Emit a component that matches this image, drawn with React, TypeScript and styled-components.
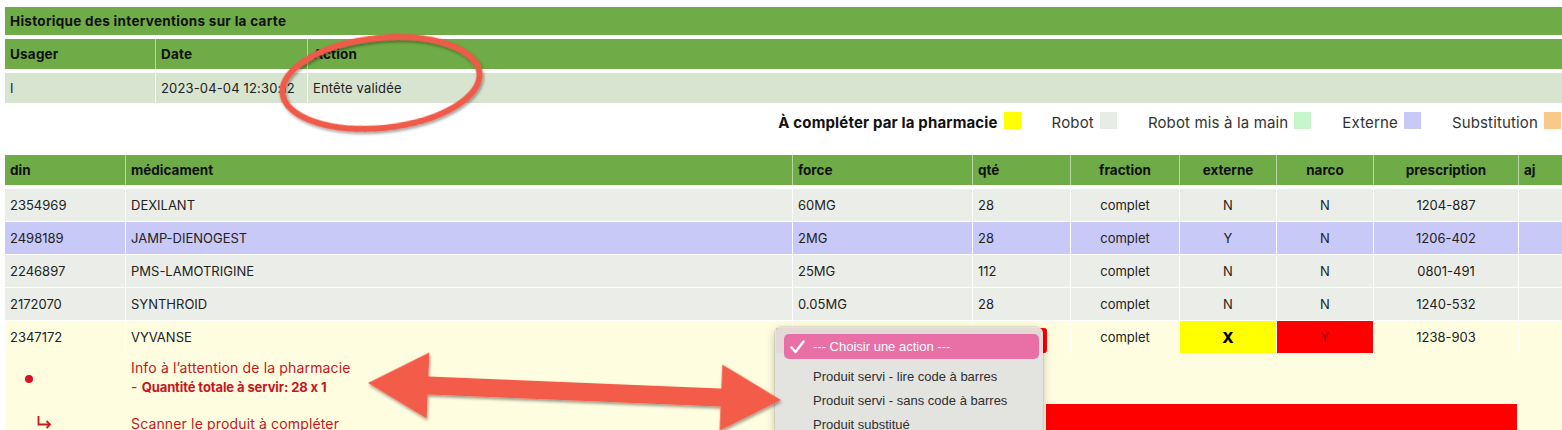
import React from 'react';
import styled, { createGlobalStyle } from 'styled-components';

const GREEN = '#6fab46';
const COLS = '120px 666px 179px 97px 108px 96px 96px 144px 1fr';

const GlobalStyle = createGlobalStyle`
  html, body { margin: 0; padding: 0; background: #fff; overflow: hidden; }
  * { box-sizing: border-box; }
`;

const Root = styled.div`
  position: relative;
  width: 1562px;
  height: 430px;
  overflow: hidden;
  padding: 7px 0 0 5px;
  font-family: Inter, "Open Sans", sans-serif;
  font-feature-settings: "calt" 0;
  color: #222;
  background: #fff;
`;

/* ---------- history table ---------- */
const TitleBar = styled.div`
  height: 28px;
  background: ${GREEN};
  display: flex;
  align-items: center;
  padding-left: 5px;
  font-weight: 700;
  font-size: 13.5px;
  letter-spacing: 0.3px;
  color: #111;
`;

const HistRow = styled.div<{ $head?: boolean }>`
  margin-top: 4px;
  height: 30px;
  display: grid;
  grid-template-columns: 150px 151px 1fr;
  column-gap: 1px;
  background: ${(p) => (p.$head ? '#b9d7a6' : '#fff')};
`;

const HistCell = styled.div<{ $head?: boolean }>`
  display: flex;
  align-items: center;
  padding-left: 5px;
  background: ${(p) => (p.$head ? GREEN : '#d6e4d0')};
  font-size: ${(p) => (p.$head ? '13.5px' : '13px')};
  font-weight: ${(p) => (p.$head ? 700 : 400)};
  letter-spacing: ${(p) => (p.$head ? '0.2px' : '0.15px')};
  color: ${(p) => (p.$head ? '#111' : '#222')};
`;

/* ---------- legend ---------- */
const Legend = styled.div`
  margin-top: 8px;
  height: 22px;
  width: 1556px;
  display: flex;
  justify-content: flex-end;
  align-items: center;
  gap: 31px;
`;

const LegendItem = styled.div<{ $bold?: boolean }>`
  display: flex;
  align-items: center;
  gap: 6px;
  font-size: 15px;
  letter-spacing: 0.15px;
  font-weight: ${(p) => (p.$bold ? 700 : 400)};
  color: ${(p) => (p.$bold ? '#111' : '#333')};
`;

const Swatch = styled.span<{ $color: string }>`
  display: block;
  width: 17px;
  height: 17px;
  background: ${(p) => p.$color};
  margin-bottom: 3px;
`;

/* ---------- main table ---------- */
const Table = styled.div`
  margin-top: 22px;
`;

const HeadRow = styled.div`
  display: grid;
  grid-template-columns: ${COLS};
  column-gap: 1px;
  height: 30px;
  background: #b9d7a6;
  margin-bottom: 4px;
`;

const HeadCell = styled.div<{ $center?: boolean }>`
  background: ${GREEN};
  display: flex;
  align-items: center;
  justify-content: ${(p) => (p.$center ? 'center' : 'flex-start')};
  padding-left: ${(p) => (p.$center ? '0' : '5px')};
  font-size: 13.5px;
  font-weight: 700;
  color: #111;
  overflow: hidden;
  white-space: nowrap;
`;

const Body = styled.div`
  display: flex;
  flex-direction: column;
  gap: 1px;
`;

const Row = styled.div`
  display: grid;
  grid-template-columns: ${COLS};
  column-gap: 1px;
  height: 32px;
  background: #fff;
`;

const Cell = styled.div<{ $bg: string; $center?: boolean; $bold?: boolean; $color?: string }>`
  background: ${(p) => p.$bg};
  display: flex;
  align-items: center;
  justify-content: ${(p) => (p.$center ? 'center' : 'flex-start')};
  padding-left: ${(p) => (p.$center ? '0' : '5px')};
  font-size: ${(p) => (p.$bold ? '15px' : '13px')};
  font-weight: ${(p) => (p.$bold ? 800 : 400)};
  color: ${(p) => p.$color || '#222'};
  white-space: nowrap;
`;

const ExpandGroup = styled.div`
  background: #fefde0;
`;

const Expansion = styled.div`
  display: grid;
  grid-template-columns: 120px 921px 471px 1fr;
  grid-template-rows: 51px 40px;
  background: #fefde0;
`;

const Dot = styled.span`
  display: block;
  width: 8px;
  height: 8px;
  border-radius: 50%;
  background: #d4141e;
  margin: 22px 0 0 20px;
`;

const InfoText = styled.div`
  padding: 5px 0 0 6px;
  font-size: 14px;
  line-height: 19px;
  letter-spacing: 0.15px;
  color: #c5161d;
`;

const Strong = styled.span`
  font-weight: 700;
  font-size: 13px;
  letter-spacing: -0.1px;
`;

const TurnIcon = styled.svg`
  margin: 12px 0 0 32px;
  display: block;
`;

const ScanText = styled.div`
  padding: 10px 0 0 6px;
  font-size: 14px;
  line-height: 19px;
  letter-spacing: 0.15px;
  color: #c5161d;
  white-space: nowrap;
`;

const RedBlock = styled.div`
  background: #ff0000;
  height: 40px;
`;

/* ---------- open select menu (overlay) ---------- */
const SelectBox = styled.div`
  position: absolute;
  left: 776px;
  top: 328px;
  width: 271px;
  height: 25px;
  background: #ff0000;
  border-radius: 3px;
`;

const Menu = styled.div`
  position: absolute;
  left: 775px;
  top: 327px;
  width: 268px;
  height: 120px;
  padding: 7px 4px 0 9px;
  background: rgba(226, 226, 224, 0.96);
  border-radius: 6px;
  box-shadow: 0 3px 10px rgba(0, 0, 0, 0.25), 0 0 0 0.5px rgba(0, 0, 0, 0.15);
  font-family: "Liberation Sans", Arial, sans-serif;
  font-size: 13px;
`;

const MenuItem = styled.div<{ $active?: boolean }>`
  height: ${(p) => (p.$active ? '25px' : '24px')};
  margin-bottom: ${(p) => (p.$active ? '5px' : '0')};
  border-radius: 5px;
  display: flex;
  align-items: center;
  padding-left: ${(p) => (p.$active ? '6px' : '29px')};
  gap: 8px;
  background: ${(p) => (p.$active ? '#e96fa7' : 'transparent')};
  color: ${(p) => (p.$active ? '#fff' : '#2f2f2f')};
  white-space: nowrap;
`;

/* ---------- annotations (overlay) ---------- */
const Annotations = styled.svg`
  position: absolute;
  left: 0;
  top: 0;
  pointer-events: none;
  overflow: visible;
`;

const history = { user: 'I', date: '2023-04-04 12:30:12', action: 'Entête validée' };

const legend = [
  { label: 'À compléter par la pharmacie', color: '#ffff00', bold: true },
  { label: 'Robot', color: '#e8ece6' },
  { label: 'Robot mis à la main', color: '#c8f6cc' },
  { label: 'Externe', color: '#c9c9f8' },
  { label: 'Substitution', color: '#f9c98a' },
];

const heads = ['din', 'médicament', 'force', 'qté', 'fraction', 'externe', 'narco', 'prescription', 'aj'];

const rows = [
  { din: '2354969', med: 'DEXILANT', force: '60MG', qte: '28', ext: 'N', narco: 'N', rx: '1204-887', bg: '#ebeee8' },
  { din: '2498189', med: 'JAMP-DIENOGEST', force: '2MG', qte: '28', ext: 'Y', narco: 'N', rx: '1206-402', bg: '#c9c9f8' },
  { din: '2246897', med: 'PMS-LAMOTRIGINE', force: '25MG', qte: '112', ext: 'N', narco: 'N', rx: '0801-491', bg: '#ebeee8' },
  { din: '2172070', med: 'SYNTHROID', force: '0.05MG', qte: '28', ext: 'N', narco: 'N', rx: '1240-532', bg: '#ebeee8' },
];

const YELLOW_ROW = '#fefde0';

const L = Math.hypot(413, 17);
const arrowPts = [
  [0, 0], [60, -33], [60, -9], [L - 60, -9], [L - 60, -33], [L, 0],
  [L - 60, 33], [L - 60, 9], [60, 9], [60, 33],
].map(([x, y]) => `${x.toFixed(1)},${y}`).join(' ');

export default function App() {
  return (
    <>
      <GlobalStyle />
      <Root>
        <TitleBar>Historique des interventions sur la carte</TitleBar>
        <HistRow $head>
          <HistCell $head>Usager</HistCell>
          <HistCell $head>Date</HistCell>
          <HistCell $head>Action</HistCell>
        </HistRow>
        <HistRow>
          <HistCell>{history.user}</HistCell>
          <HistCell>{history.date}</HistCell>
          <HistCell>{history.action}</HistCell>
        </HistRow>

        <Legend>
          {legend.map((l) => (
            <LegendItem key={l.label} $bold={l.bold}>
              {l.label}
              <Swatch $color={l.color} />
            </LegendItem>
          ))}
        </Legend>

        <Table>
          <HeadRow>
            {heads.map((h, i) => (
              <HeadCell key={h} $center={i >= 4 && i < 8}>
                {h}
              </HeadCell>
            ))}
          </HeadRow>
          <Body>
            {rows.map((r) => (
              <Row key={r.din}>
                <Cell $bg={r.bg}>{r.din}</Cell>
                <Cell $bg={r.bg}>{r.med}</Cell>
                <Cell $bg={r.bg}>{r.force}</Cell>
                <Cell $bg={r.bg}>{r.qte}</Cell>
                <Cell $bg={r.bg} $center>complet</Cell>
                <Cell $bg={r.bg} $center>{r.ext}</Cell>
                <Cell $bg={r.bg} $center>{r.narco}</Cell>
                <Cell $bg={r.bg} $center>{r.rx}</Cell>
                <Cell $bg={r.bg} />
              </Row>
            ))}
            <ExpandGroup>
              <Row>
                <Cell $bg={YELLOW_ROW}>2347172</Cell>
                <Cell $bg={YELLOW_ROW}>VYVANSE</Cell>
                <Cell $bg={YELLOW_ROW} />
                <Cell $bg={YELLOW_ROW} />
                <Cell $bg={YELLOW_ROW} $center>complet</Cell>
                <Cell $bg="#ffff00" $center $bold $color="#000">X</Cell>
                <Cell $bg="#ff0000" $center $color="#9a0000">Y</Cell>
                <Cell $bg={YELLOW_ROW} $center>1238-903</Cell>
                <Cell $bg={YELLOW_ROW} />
              </Row>
              <Expansion>
                <div>
                  <Dot />
                </div>
                <InfoText>
                  Info à l’attention de la pharmacie
                  <br />- <Strong>Quantité totale à servir: 28 x 1</Strong>
                </InfoText>
                <div />
                <div />
                <div>
                  <TurnIcon width="15" height="13" viewBox="0 0 15 13">
                    <path d="M1.5 0 V8.5 H13" fill="none" stroke="#d01818" strokeWidth="1.8" />
                    <path d="M9.5 5 L13 8.5 L9.5 12" fill="none" stroke="#d01818" strokeWidth="1.8" />
                  </TurnIcon>
                </div>
                <ScanText>Scanner le produit à compléter</ScanText>
                <RedBlock />
                <div />
              </Expansion>
            </ExpandGroup>
          </Body>
        </Table>

        <SelectBox />
        <Menu>
          <MenuItem $active>
            <svg width="15" height="14" viewBox="0 0 15 14">
              <path d="M1.5 7.5 L5.5 12 L13.5 1.5" fill="none" stroke="#fff" strokeWidth="2.4" strokeLinecap="round" strokeLinejoin="round" />
            </svg>
            --- Choisir une action ---
          </MenuItem>
          <MenuItem>Produit servi - lire code à barres</MenuItem>
          <MenuItem>Produit servi - sans code à barres</MenuItem>
          <MenuItem>Produit substitué</MenuItem>
        </Menu>

        <Annotations width="1562" height="430" viewBox="0 0 1562 430">
          <defs>
            <filter id="shadow" x="-10%" y="-20%" width="120%" height="150%">
              <feDropShadow dx="1" dy="2" stdDeviation="1.6" floodColor="#000" floodOpacity="0.4" />
            </filter>
          </defs>
          <ellipse
            cx="381"
            cy="83"
            rx="99"
            ry="45"
            transform="rotate(-6 381 83)"
            fill="none"
            stroke="#f05a4a"
            strokeWidth="6"
            filter="url(#shadow)"
          />
          <polygon
            points={arrowPts}
            transform="translate(368 383) rotate(2.36)"
            fill="#f35b49"
            filter="url(#shadow)"
          />
        </Annotations>
      </Root>
    </>
  );
}
